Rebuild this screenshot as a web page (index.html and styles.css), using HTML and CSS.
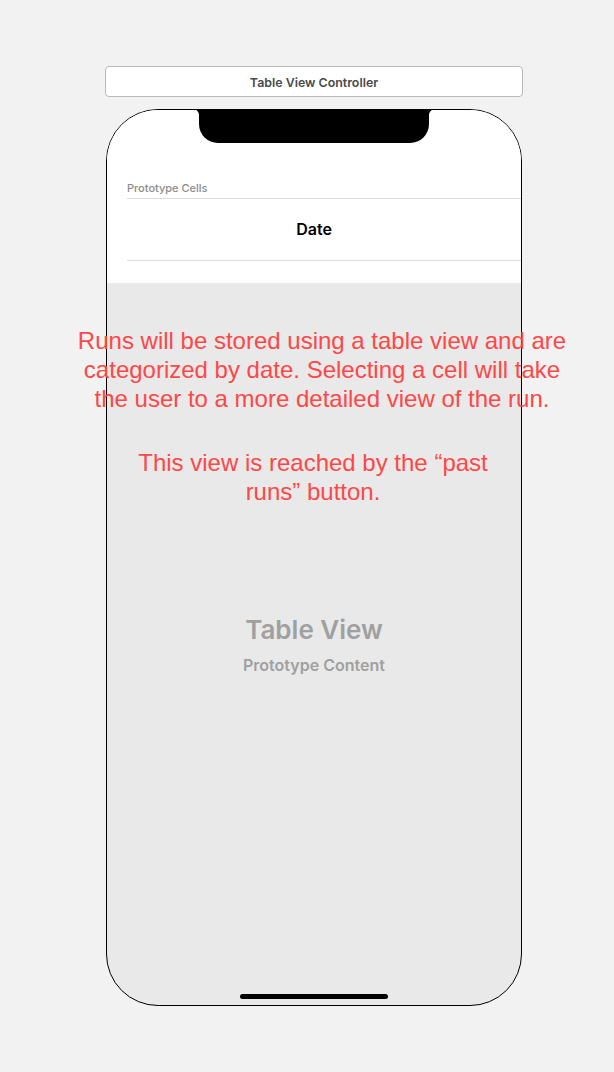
FILE: index.html
```html
<!DOCTYPE html>
<html>
<head>
<meta charset="utf-8">
<link rel="stylesheet" href="styles.css">
</head>
<body>
<div class="canvas">
  <div class="scene-title">Table View Controller</div>
  <div class="phone">
    <div class="notch"></div>
    <div class="table-header">
      <div class="section-label">Prototype Cells</div>
      <div class="cell">Date</div>
    </div>
    <div class="table-body">
      <div class="tv-title">Table View</div>
      <div class="tv-sub">Prototype Content</div>
    </div>
    <div class="home-indicator"></div>
  </div>
  <p class="note note-1">Runs will be stored using a table view and are categorized by date. Selecting a cell will take the user to a more detailed view of the run.</p>
  <p class="note note-2">This view is reached by the “past runs” button.</p>
</div>
</body>
</html>
```
FILE: styles.css
```css
html, body {
  margin: 0;
  padding: 0;
  background: #f2f2f2;
}
.canvas {
  position: relative;
  width: 614px;
  height: 1072px;
  padding-top: 66px;
  box-sizing: border-box;
  font-family: "Inter", "Liberation Sans", sans-serif;
}
.scene-title {
  margin-left: 105px;
  width: 418px;
  height: 31px;
  box-sizing: border-box;
  border: 1px solid #b9b9b9;
  border-radius: 4px;
  background: #fff;
  display: flex;
  align-items: center;
  justify-content: center;
  padding-top: 2px;
  font-size: 12.4px;
  font-weight: 600;
  color: #4a4a4a;
}
.phone {
  position: relative;
  margin-top: 12px;
  margin-left: 106px;
  width: 416px;
  height: 897px;
  box-sizing: border-box;
  border: 1px solid #000;
  border-radius: 52px;
  overflow: hidden;
  background: #e9e9e9;
  display: flex;
  flex-direction: column;
}
.notch {
  position: absolute;
  top: -1px;
  left: 92px;
  width: 230px;
  height: 34px;
  background: #000;
  border-radius: 0 0 19px 19px;
}
.notch::before,
.notch::after {
  content: "";
  position: absolute;
  top: 0;
  width: 6px;
  height: 6px;
}
.notch::before {
  left: -6px;
  background: radial-gradient(circle at 0 100%, transparent 5.5px, #000 6.3px);
}
.notch::after {
  right: -6px;
  background: radial-gradient(circle at 100% 100%, transparent 5.5px, #000 6.3px);
}
.table-header {
  background: #fff;
  height: 173px;
  padding-top: 71px;
  padding-left: 20px;
  box-sizing: border-box;
}
.section-label {
  height: 18px;
  box-sizing: border-box;
  border-bottom: 1px solid #dcdcdc;
  font-size: 11px;
  line-height: 14px;
  color: #8c8c8c;
  font-weight: 500;
}
.cell {
  height: 62px;
  box-sizing: border-box;
  border-bottom: 1px solid #dcdcdc;
  display: flex;
  align-items: center;
  justify-content: center;
  padding-right: 20px;
  padding-bottom: 2px;
  font-size: 16px;
  font-weight: 600;
  color: #000;
}
.table-body {
  flex: 1;
  display: flex;
  flex-direction: column;
  align-items: center;
  padding-top: 331px;
  color: #a0a0a0;
  font-weight: 600;
}
.tv-title {
  font-size: 26px;
  line-height: 32px;
}
.tv-sub {
  margin-top: 9px;
  font-size: 16px;
  line-height: 20px;
}
.home-indicator {
  position: absolute;
  left: 133px;
  bottom: 6px;
  width: 148px;
  height: 5px;
  border-radius: 3px;
  background: #000;
}
.note {
  position: absolute;
  margin: 0;
  font-family: "Liberation Sans", Arial, sans-serif;
  font-size: 24px;
  line-height: 29px;
  color: #ff4747;
  text-align: center;
}
.note-1 {
  left: 72px;
  top: 326px;
  width: 500px;
}
.note-2 {
  left: 128px;
  top: 448px;
  width: 370px;
}
```
